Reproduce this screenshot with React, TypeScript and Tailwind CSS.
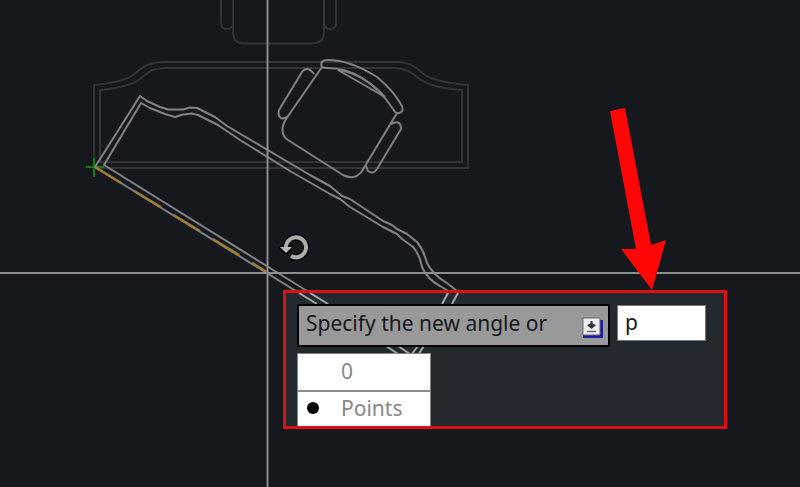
const options = [
  { value: "0", selected: false },
  { value: "Points", selected: true },
];

// Desk and chairs in their original position
const Furniture = () => (
  <g fill="none" stroke="#303337" strokeWidth="2">
    <path d="M221 0V23Q221 29 227 29Q233 29 233 23V0M233 22V32Q233 43.5 245 43.5H312Q324 43.5 324 32V22M324 0V23Q324 29 330 29Q336 29 336 23V0" />
    <path d="M94 168V85Q124 82 133 75C142 68 147 62 164 62H400Q412 63 421 72Q431 82 468 85V168Z" />
    <path d="M100 162V90Q130 87 140 79C149 71 153 68 168 68H396Q408 69 416 76Q428 88 462 90V162Z" />
  </g>
);

const Chair = () => (
  <g fill="none" stroke="#7e8083" strokeWidth="2" strokeLinejoin="round">
    <path d="M322 67L286 119Q278 133 288 140L343 175Q355 181 362 171L397 113" />
    <path d="M322 67Q319 60 328 60Q350 60 377 77Q394 91 402 106Q404 112 399 113Q396 114 393 109Q381 90 362 78Q346 68 327 68Q324 68 322 67Z" />
    <path d="M338 70L385 97M341 70Q366 76 385 97" />
    <path d="M314 74Q307 65 302 72L279 110Q277 118 283 118.5L288 117" />
    <path d="M391 124Q401 119 401 129L377 169Q373 175 368 171L366 166" />
  </g>
);

// Preview of the desk being rotated around its base point
const RotatedDesk = () => (
  <g fill="none" stroke="#808285" strokeWidth="2" strokeLinejoin="round">
    <path d="M317 304L95 167L140 96L147 101L160 107L168 109.5L183 109.5L190 107.5L197 108L215 117L227 126L293 165L310 175L330 186L342 196L350 199L383 221L392 225L397 229L407 234L417 242Q423 249 427 263Q433 275 447 283L457 291" />
    <path d="M328 304L104 165L141 103L150 108L165 114L175 117L183 114.5L192 113.5L198 115L208 120L218 125L240 140L290 171L330 194L340 199L350 207L383 227L397 234L402 239L413 247Q419 253 422 267Q427 279 440 286L450 292" />
  </g>
);

const Drawing = () => (
  <svg className="absolute inset-0 h-full w-full" aria-hidden="true">
    <Furniture />
    <path d="M94 158V177M86 167H104" stroke="#087d10" strokeWidth="2" />
    <RotatedDesk />
    <Chair />
    <path d="M95 167L267 272" stroke="#a17e2f" strokeWidth="2.4" strokeDasharray="31 15" />

    {/* Crosshair */}
    <line x1="267.5" y1="0" x2="267.5" y2="100%" stroke="#8b8d8f" strokeWidth="2" />
    <line x1="0" y1="273" x2="100%" y2="273" stroke="#8b8d8f" strokeWidth="2" />

    {/* Rotate cursor */}
    <g fill="none" stroke="#050607" strokeWidth="7">
      <path d="M286 247A10 10 0 1 1 291 256" />
      <path d="M281 248H290L286 252Z" fill="#050607" strokeWidth="5" strokeLinejoin="round" />
    </g>
    <path d="M286 247A10 10 0 1 1 291 256" fill="none" stroke="#adadad" strokeWidth="4" />
    <path d="M280 247H292L286 253Z" fill="#b7b7b7" />
  </svg>
);

const PromptPanel = () => (
  <section className="absolute top-[290px] left-[283px] w-[444px] border-3 border-[#dc1013] bg-[#23292f] pt-[11px] pl-[11px]">
    <svg className="absolute inset-0 h-full w-full" viewBox="286 293 438 133" aria-hidden="true">
      <g stroke="#a5a8aa" strokeWidth="2">
        <path d="M299 293L317 304M310 293L328 304M448 293L442 304M458 293L452 304" />
        <path d="M386 346L398 354M398 346L410 354M418 346L411 355M424 346L418 355" />
      </g>
    </svg>

    <div className="relative flex items-start gap-[7px]">
      <div className="flex h-[43px] w-[313px] items-center justify-between rounded-xs border-2 border-black bg-[#999999] pr-1 pl-[7px]">
        <label htmlFor="angle" className="pb-1.5 text-[21px] leading-7 whitespace-nowrap text-[#15171d]">
          Specify the new angle or
        </label>
        <button type="button" aria-label="Show options" className="mt-1">
          <svg width="22" height="22" viewBox="0 0 22 22">
            <path d="M3 3H21V21H1V18H3Z" fill="#201da5" />
            <path d="M1 1H18V18H1Z" fill="#eeeef0" stroke="#66676b" />
            <path d="M9.5 4V11" stroke="#33343c" strokeWidth="2" />
            <path d="M5 8L9.5 6L14 8L9.5 12Z" fill="#33343c" />
            <path d="M5 14.5H14" stroke="#66676b" strokeWidth="1.5" />
          </svg>
        </button>
      </div>
      <input
        id="angle"
        type="text"
        defaultValue="p"
        className="mt-px h-9 w-[89px] border border-[#777777] bg-white px-[7px] pb-0.5 text-[21px] text-[#15171d] outline-none"
      />
    </div>

    <div className="relative mt-[6px] w-[134px] border border-b-0 border-[#858585] bg-white">
      {options.map((option) => (
        <button
          key={option.value}
          type="button"
          className="flex h-9 w-full items-center pb-0.5 text-left text-[21px] leading-7 text-[#87878a] last:border-t-2 last:border-[#8b8b8b]"
        >
          <span className="flex w-[43px] pl-[9px]">{option.selected && <span className="size-3 rounded-full bg-black" />}</span>
          {option.value}
        </button>
      ))}
    </div>
  </section>
);

const App = () => {
  return (
    <main className="relative min-h-screen overflow-hidden bg-[#15181d] font-['Noto_Sans','Open_Sans',sans-serif]">
      <Drawing />
      <PromptPanel />

      {/* Pointer to the input */}
      <svg className="pointer-events-none absolute top-[108px] left-[610px]" width="57" height="182" viewBox="610 108 57 182" aria-hidden="true">
        <path d="M610 111L625 108L651 245L666 240L652 290L621 249L636 249Z" fill="#ff0505" />
      </svg>
    </main>
  );
};

export default App;
